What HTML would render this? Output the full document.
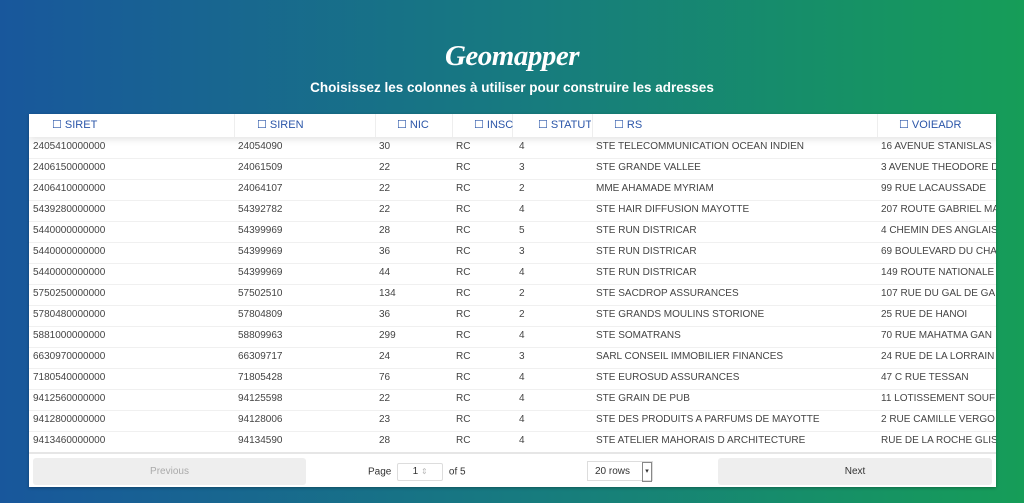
<!DOCTYPE html>
<html><head><meta charset="utf-8"><style>
body{margin:0;width:1024px;height:503px;overflow:hidden;background:linear-gradient(90deg,#18579c 0%,#177a80 50%,#169d58 100%);font-family:"Liberation Sans",sans-serif;position:relative}
h1{position:absolute;top:40px;left:0;width:1024px;text-align:center;margin:0;color:#fff;font-family:"Liberation Serif",serif;font-style:italic;font-weight:bold;font-size:29px;letter-spacing:-0.5px}
h2{position:absolute;top:80px;left:0;width:1024px;text-align:center;margin:0;color:#fff;font-size:13.5px;font-weight:bold}
.tbl{position:absolute;left:29px;top:114px;width:967px;height:373px;background:#fff;overflow:hidden;box-shadow:0 1px 3px rgba(0,0,0,.3)}
.hd{position:absolute;top:0;left:0;height:23px;width:1100px;box-shadow:0 2px 8px rgba(0,0,0,.12);background:#fff}
.hd div{position:absolute;top:0;height:23px;border-right:1px solid #eee}
.hd span{position:absolute;top:0;line-height:23px;color:#2a55a8;font-size:11px;white-space:nowrap}
.r{position:absolute;left:0;height:21px;width:1100px;border-bottom:1px solid #f0f0f0;font-size:10px;color:#444}
.r span{position:absolute;top:0;line-height:20px;white-space:nowrap}
.pg{position:absolute;left:0;top:338px;width:967px;height:35px;border-top:2px solid #e6e6e6;font-size:10px;color:#333}
.btn{position:absolute;top:4px;height:27px;line-height:27px;background:#eee;text-align:center;border-radius:3px}
</style></head><body>
<h1>Geomapper</h1>
<h2>Choisissez les colonnes à utiliser pour construire les adresses</h2>
<div class="tbl">
<div class="hd">
<div style="left:0;width:205px"></div>
<div style="left:205px;width:141px"></div>
<div style="left:346px;width:77px"></div>
<div style="left:423px;width:60px"></div>
<div style="left:483px;width:80px"></div>
<div style="left:563px;width:285px"></div>
<span style="left:23px">☐ SIRET</span>
<span style="left:228px">☐ SIREN</span>
<span style="left:368px">☐ NIC</span>
<span style="left:445px">☐ INSC</span>
<span style="left:509px;width:53px;overflow:hidden">☐ STATUT</span>
<span style="left:585px">☐ RS</span>
<span style="left:870px">☐ VOIEADR</span>
</div>
<div id="rows"></div>
<div class="pg">
<div class="btn" style="left:4px;width:273px;color:#aaa">Previous</div>
<div style="position:absolute;left:339px;top:9px;line-height:18px">Page <span style="display:inline-block;width:44px;height:16px;border:1px solid #ddd;border-radius:2px;text-align:center;vertical-align:middle;line-height:16px;margin:0 3px">1 <span style="color:#bbb;font-size:8px">⇕</span></span> of 5</div>
<div style="position:absolute;left:558px;top:7px;width:66px;height:20px;border:1px solid #ddd;line-height:20px;padding-left:7px;box-sizing:border-box">20 rows<span style="position:absolute;right:0;top:0;width:8px;height:18px;border:1px solid #888;font-size:7px;line-height:18px;text-align:center">▾</span></div>
<div class="btn" style="left:689px;width:274px;color:#333">Next</div>
</div>
</div>
<script>
var d=[["2405410000000","24054090","30","RC","4","STE TELECOMMUNICATION OCEAN INDIEN","16 AVENUE STANISLAS"],
["2406150000000","24061509","22","RC","3","STE GRANDE VALLEE","3 AVENUE THEODORE D"],
["2406410000000","24064107","22","RC","2","MME AHAMADE MYRIAM","99 RUE LACAUSSADE"],
["5439280000000","54392782","22","RC","4","STE HAIR DIFFUSION MAYOTTE","207 ROUTE GABRIEL MA"],
["5440000000000","54399969","28","RC","5","STE RUN DISTRICAR","4 CHEMIN DES ANGLAIS"],
["5440000000000","54399969","36","RC","3","STE RUN DISTRICAR","69 BOULEVARD DU CHA"],
["5440000000000","54399969","44","RC","4","STE RUN DISTRICAR","149 ROUTE NATIONALE"],
["5750250000000","57502510","134","RC","2","STE SACDROP ASSURANCES","107 RUE DU GAL DE GA"],
["5780480000000","57804809","36","RC","2","STE GRANDS MOULINS STORIONE","25 RUE DE HANOI"],
["5881000000000","58809963","299","RC","4","STE SOMATRANS","70 RUE MAHATMA GAN"],
["6630970000000","66309717","24","RC","3","SARL CONSEIL IMMOBILIER FINANCES","24 RUE DE LA LORRAIN"],
["7180540000000","71805428","76","RC","4","STE EUROSUD ASSURANCES","47 C RUE TESSAN"],
["9412560000000","94125598","22","RC","4","STE GRAIN DE PUB","11 LOTISSEMENT SOUF"],
["9412800000000","94128006","23","RC","4","STE DES PRODUITS A PARFUMS DE MAYOTTE","2 RUE CAMILLE VERGO"],
["9413460000000","94134590","28","RC","4","STE ATELIER MAHORAIS D ARCHITECTURE","RUE DE LA ROCHE GLIS"]];
var x=[4,209,350,427,490,567,852],h="";
d.forEach(function(r,i){h+='<div class="r" style="top:'+(23+i*21)+'px">';r.forEach(function(c,j){h+='<span style="left:'+x[j]+'px">'+c+'</span>'});h+='</div>'});
document.getElementById("rows").innerHTML=h;
</script>
</body></html>
